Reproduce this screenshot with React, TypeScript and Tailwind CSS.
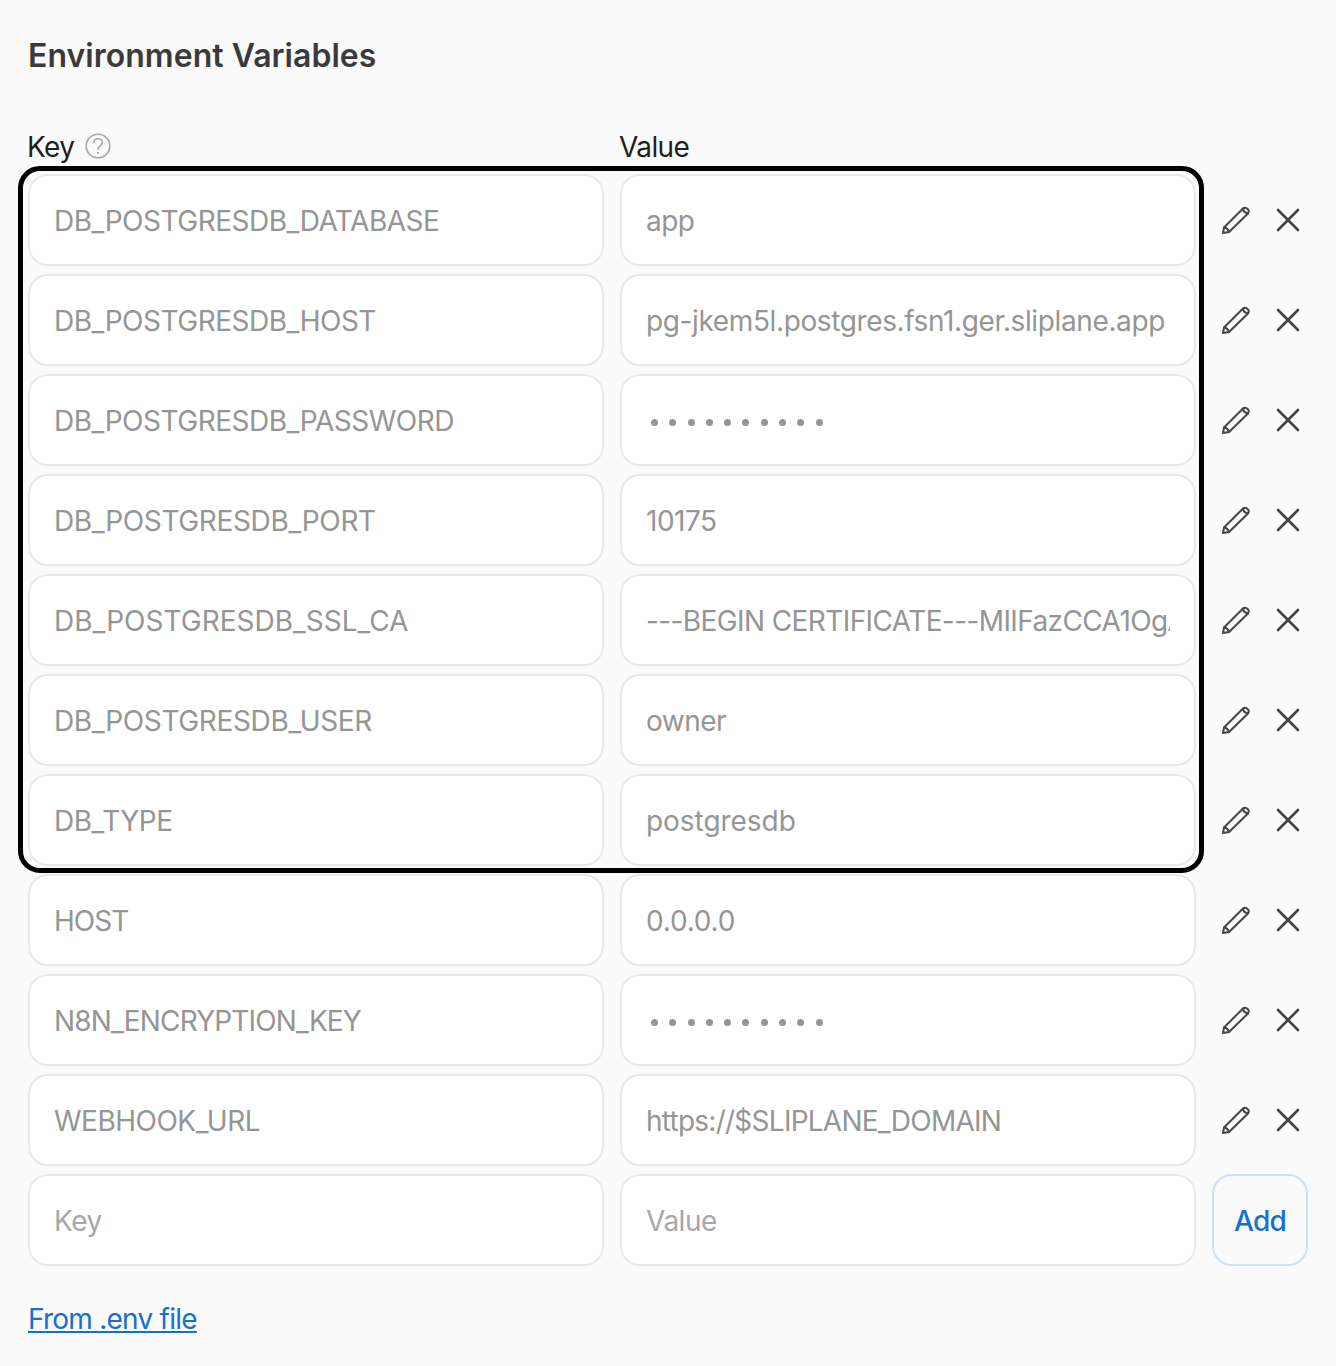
import { CSSProperties } from 'react';

type EnvVar = { key: string; value: string; secret?: boolean; keyTrack?: string; valueTrack?: string };

const boxed: EnvVar[] = [
  { key: 'DB_POSTGRESDB_DATABASE', value: 'app' },
  { key: 'DB_POSTGRESDB_HOST', value: 'pg-jkem5l.postgres.fsn1.ger.sliplane.app', valueTrack: 'tracking-[-0.38px]' },
  { key: 'DB_POSTGRESDB_PASSWORD', value: '••••••••••', secret: true },
  { key: 'DB_POSTGRESDB_PORT', value: '10175', keyTrack: 'tracking-[-0.35px]' },
  { key: 'DB_POSTGRESDB_SSL_CA', value: '---BEGIN CERTIFICATE---MIIFazCCA1OgAwIBAgIRAIIQz7DSQONZRGPgu2OCiwAwDQYJKoZIhvcNAQEL', keyTrack: 'tracking-[0px]', valueTrack: 'tracking-[-0.6px]' },
  { key: 'DB_POSTGRESDB_USER', value: 'owner', keyTrack: 'tracking-[-0.35px]' },
  { key: 'DB_TYPE', value: 'postgresdb', valueTrack: 'tracking-[-0.05px]' },
];

const rest: EnvVar[] = [
  { key: 'HOST', value: '0.0.0.0', keyTrack: 'tracking-[-1px]', valueTrack: 'tracking-[-0.2px]' },
  { key: 'N8N_ENCRYPTION_KEY', value: '••••••••••', secret: true, keyTrack: 'tracking-[-0.85px]' },
  { key: 'WEBHOOK_URL', value: 'https://$SLIPLANE_DOMAIN', valueTrack: 'tracking-[-0.75px]' },
];

const font: CSSProperties = { fontFamily: 'Inter, "Liberation Sans", sans-serif' };

const inputClass =
  'h-[92px] w-full min-w-0 rounded-[20px] border-2 border-[#e8e8e8] bg-white px-6 pt-0.5 text-[28px] text-[#959595] outline-none placeholder:text-[#a6a8ab]';

function PencilIcon() {
  return (
    <svg width="28" height="28" viewBox="0 0 28 28" fill="none" stroke="#444444" strokeWidth="2" strokeLinejoin="round" strokeLinecap="round">
      <path d="M1 27 L2 21.5 L21 2.5 A3.6 3.6 0 0 1 26 7.5 L7 26 Z" />
      <path d="M2 21.5 C4.2 21.8 6.4 23.8 7 26" />
      <path d="M21.3 2.3 C21 5 23 7.2 26 7.2" />
    </svg>
  );
}

function CloseIcon() {
  return (
    <svg width="24" height="24" viewBox="0 0 24 24" fill="none" stroke="#444444" strokeWidth="2.6" strokeLinecap="round">
      <path d="M2 2 L22 22 M22 2 L2 22" />
    </svg>
  );
}

function Row({ item }: { item: EnvVar }) {
  return (
    <div className="grid grid-cols-[576px_576px_96px] gap-x-4">
      <input readOnly value={item.key} className={`${inputClass} ${item.keyTrack ?? 'tracking-[-0.5px]'}`} />
      {item.secret ? (
        <div className="flex h-[92px] items-center rounded-[20px] border-2 border-[#e8e8e8] bg-white px-6 pt-1">
          <div className="ml-[5px] flex gap-[11.3px]">
            {Array.from({ length: 10 }).map((_, i) => (
              <span key={i} className="size-[7px] rounded-full bg-[#959595]" />
            ))}
          </div>
        </div>
      ) : (
        <input readOnly value={item.value} className={`${inputClass} ${item.valueTrack ?? 'tracking-[-0.5px]'}`} />
      )}
      <div className="flex items-center gap-[26px] pl-[10px]">
        <button className="flex"><PencilIcon /></button>
        <button className="flex"><CloseIcon /></button>
      </div>
    </div>
  );
}

export default function App() {
  return (
    <div className="min-h-[1366px] bg-[#fafafb] px-7 pt-[35px]" style={font}>
      <h2 className="text-[32px] leading-[42px] font-semibold tracking-[0.03px] text-[#3a3a3a]">Environment Variables</h2>

      <div className="mt-[52px] -ml-px grid grid-cols-[576px_576px_96px] gap-x-4 text-[28px] leading-9 tracking-[-0.6px] text-[#1f1f1f]">
        <div className="flex items-center gap-[11px]">
          <span>Key</span>
          <svg className="-translate-y-px" width="26" height="26" viewBox="0 0 26 26" fill="none" stroke="#a8a8a8" strokeWidth="1.6" strokeLinecap="round">
            <circle cx="13" cy="13" r="11.8" />
            <path d="M8.6 9.6 C8.9 7 10.8 5.8 13 5.8 C15.5 5.8 17.4 7.4 17.4 9.6 C17.4 12.7 13 13 13 16.2" />
            <path d="M13 19.8 L13 20" strokeWidth="2" />
          </svg>
        </div>
        <div>Value</div>
      </div>

      <div className="mt-[9px] flex flex-col gap-2">
        <div className="relative flex flex-col gap-2">
          {boxed.map((item) => <Row key={item.key} item={item} />)}
          <div className="pointer-events-none absolute top-[-8px] left-[-10px] h-[707px] w-[1186px] rounded-[22px] border-[5px] border-black" />
        </div>
        {rest.map((item) => <Row key={item.key} item={item} />)}
        <div className="grid grid-cols-[576px_576px_96px] gap-x-4">
          <input placeholder="Key" className={`${inputClass} tracking-[-0.5px]`} />
          <input placeholder="Value" className={`${inputClass} tracking-[-0.5px]`} />
          <button className="h-[92px] rounded-[20px] border-2 border-[#cfe0f2] pt-0.5 text-[28px] font-medium tracking-[-0.8px] text-[#1570d1]">Add</button>
        </div>
      </div>

      <a href="#" className="mt-[35px] block w-fit text-[28px] leading-9 tracking-[-0.75px] text-[#1570d1] underline underline-offset-2 decoration-2">From .env file</a>
    </div>
  );
}
